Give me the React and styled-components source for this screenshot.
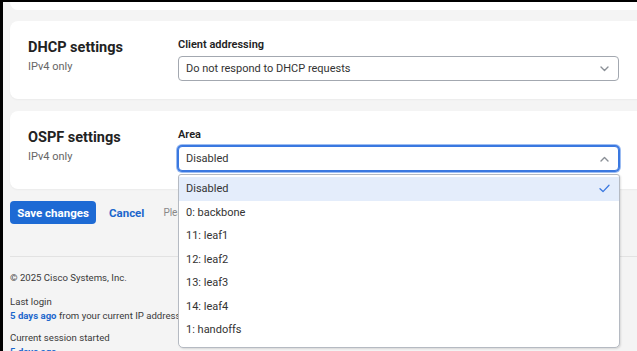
import React from "react";
import styled, { createGlobalStyle } from "styled-components";

const GlobalStyle = createGlobalStyle`
  html, body {
    margin: 0;
    padding: 0;
    height: 100%;
    overflow: hidden;
    background: #f4f4f4;
  }
  body {
    font-family: Roboto, Inter, "Liberation Sans", sans-serif;
    color: #2b2b2b;
  }
`;

const Page = styled.div`
  width: 700px;
  min-height: 351px;
  box-sizing: border-box;
  border-top: 2px solid #000;
  border-left: 3px solid #000;
  padding: 0 0 0 7px;
  background: #f4f4f4;
`;

const Card = styled.section`
  background: #fff;
  border-radius: 8px;
  box-shadow: 0 1px 2px rgba(0, 0, 0, 0.04);
  box-sizing: border-box;
  display: grid;
  grid-template-columns: 150px 441px;
  padding: 16px 18px 18px;
  margin-bottom: 12px;
`;

const CardStub = styled.div`
  height: 8px;
  background: #fff;
  border-radius: 0 0 8px 8px;
  margin-bottom: 11px;
`;

const Heading = styled.div`
  display: flex;
  flex-direction: column;
  padding-top: 1px;
`;

const Title = styled.h2`
  margin: 0;
  font-size: 14.5px;
  line-height: 20px;
  font-weight: 700;
  color: #222;
`;

const Sub = styled.div`
  font-size: 11px;
  line-height: 16px;
  color: #666;
  margin-top: 1px;
`;

const Field = styled.div`
  display: flex;
  flex-direction: column;
  gap: 3px;
`;

const Label = styled.label`
  font-size: 11px;
  line-height: 16px;
  font-weight: 600;
  color: #222;
`;

const SelectBox = styled.div`
  position: relative;
  height: 25px;
  box-sizing: border-box;
  border: 1px solid ${({ $focused }) => ($focused ? "#3a78e0" : "#a3a8b0")};
  border-radius: 4px;
  box-shadow: ${({ $focused }) =>
    $focused ? "0 0 0 1px #3a78e0, 0 0 0 2px #9dbdf2" : "none"};
  display: flex;
  align-items: center;
  justify-content: space-between;
  padding: 0 9px 0 7px;
  font-size: 11px;
  color: #333;
  background: #fff;
`;

const Menu = styled.ul`
  position: absolute;
  top: calc(100% + 4px);
  left: -1px;
  right: -2px;
  margin: 0;
  padding: 2px 0 5px;
  list-style: none;
  background: #fff;
  border: 1px solid #b5bac2;
  border-radius: 3px 3px 5px 5px;
  box-shadow: 1px 1px 2px rgba(0, 0, 0, 0.12);
  z-index: 10;
`;

const Option = styled.li`
  height: 23.5px;
  display: flex;
  align-items: center;
  justify-content: space-between;
  padding: 0 9px 0 7px;
  font-size: 11px;
  color: #333;
  background: ${({ $selected }) => ($selected ? "#e4edfb" : "transparent")};
`;

const Actions = styled.div`
  display: flex;
  align-items: center;
  gap: 13px;
  margin-top: 1px;
  height: 23px;
`;

const PrimaryButton = styled.button`
  height: 23px;
  width: 86px;
  border: none;
  border-radius: 4px;
  background: #1d6ad4;
  color: #fff;
  font-family: inherit;
  font-size: 11.5px;
  font-weight: 700;
  padding: 0;
`;

const LinkButton = styled.button`
  border: none;
  background: none;
  color: #1c67cc;
  font-family: inherit;
  font-size: 11.5px;
  font-weight: 700;
  padding: 0;
`;

const Hint = styled.span`
  font-size: 10px;
  color: #888;
  margin-left: 6px;
  white-space: nowrap;
`;

const Footer = styled.footer`
  margin-top: 32px;
  border-top: 1px solid #e2e2e2;
  padding-top: 14px;
  font-size: 9.6px;
  line-height: 14px;
  color: #3a3a3a;
`;

const FooterBlock = styled.div`
  margin-bottom: ${({ $gap }) => $gap || 8}px;
`;

const Strong = styled.a`
  color: #1c67cc;
  font-weight: 700;
  text-decoration: none;
`;

const Chevron = ({ up }) => (
  <svg width="9" height="6" viewBox="0 0 9 6" fill="none">
    <path
      d={up ? "M1 5 L4.5 1.5 L8 5" : "M1 1 L4.5 4.5 L8 1"}
      stroke="#8a8f96"
      strokeWidth="1.4"
      strokeLinecap="round"
      strokeLinejoin="round"
    />
  </svg>
);

const Check = () => (
  <svg width="11" height="9" viewBox="0 0 11 9" fill="none">
    <path
      d="M1 4.8 L4 7.6 L10 1.2"
      stroke="#3a78e0"
      strokeWidth="1.3"
      strokeLinecap="round"
      strokeLinejoin="round"
    />
  </svg>
);

const areas = [
  "Disabled",
  "0: backbone",
  "11: leaf1",
  "12: leaf2",
  "13: leaf3",
  "14: leaf4",
  "1: handoffs",
];

const App = () => {
  return (
    <>
      <GlobalStyle />
      <Page>
        <CardStub />
        <Card>
          <Heading>
            <Title>DHCP settings</Title>
            <Sub>IPv4 only</Sub>
          </Heading>
          <Field>
            <Label>Client addressing</Label>
            <SelectBox>
              <span>Do not respond to DHCP requests</span>
              <Chevron />
            </SelectBox>
          </Field>
        </Card>
        <Card>
          <Heading>
            <Title>OSPF settings</Title>
            <Sub>IPv4 only</Sub>
          </Heading>
          <Field>
            <Label>Area</Label>
            <SelectBox $focused>
              <span>Disabled</span>
              <Chevron up />
              <Menu>
                {areas.map((a, i) => (
                  <Option key={a} $selected={i === 0}>
                    <span>{a}</span>
                    {i === 0 && <Check />}
                  </Option>
                ))}
              </Menu>
            </SelectBox>
          </Field>
        </Card>
        <Actions>
          <PrimaryButton>Save changes</PrimaryButton>
          <LinkButton>Cancel</LinkButton>
          <Hint>Please allow 1-2 minutes for changes to take effect.</Hint>
        </Actions>
        <Footer>
          <FooterBlock $gap={10}>© 2025 Cisco Systems, Inc.</FooterBlock>
          <FooterBlock>
            <div>Last login</div>
            <div>
              <Strong href="#">5 days ago</Strong> from your current IP address
            </div>
          </FooterBlock>
          <FooterBlock>
            <div>Current session started</div>
            <div>
              <Strong href="#">5 days ago</Strong>
            </div>
          </FooterBlock>
        </Footer>
      </Page>
    </>
  );
};

export default App;
